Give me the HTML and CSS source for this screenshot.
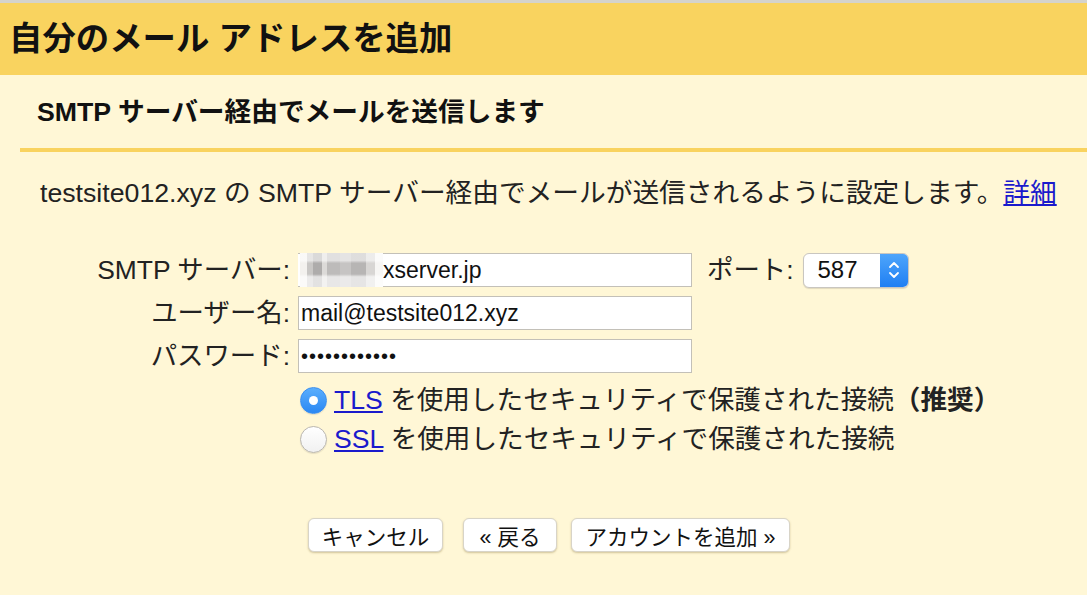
FILE: index.html
```html
<!DOCTYPE html>
<html lang="ja">
<head>
    <meta charset="UTF-8">
    <title>自分のメール アドレスを追加</title>
    <link rel="stylesheet" href="styles.css">
</head>
<body>
    <div class="header">
        <h1 class="title">自分のメール アドレスを追加</h1>
    </div>

    <div class="sub-header">
        <h2 class="sub-title">SMTP サーバー経由でメールを送信します</h2>
    </div>

    <p class="desc">testsite012.xyz の SMTP サーバー経由でメールが送信されるように設定します。<a href="#">詳細</a></p>

    <div class="form">
        <div class="row">
            <label class="label">SMTP サーバー:</label>
            <div class="field-wrap">
                <span class="blur"></span>
                <input class="field field-server" type="text" value="xserver.jp">
            </div>
            <label class="port-label">ポート:</label>
            <div class="select">
                <span class="select-value">587</span>
                <span class="select-arrows">
                    <svg width="14" height="22" viewBox="0 0 14 22">
                        <path d="M3 8 L7 4 L11 8" fill="none" stroke="#fff" stroke-width="1.8" stroke-linecap="round" stroke-linejoin="round"/>
                        <path d="M3 14 L7 18 L11 14" fill="none" stroke="#fff" stroke-width="1.8" stroke-linecap="round" stroke-linejoin="round"/>
                    </svg>
                </span>
            </div>
        </div>
        <div class="row">
            <label class="label">ユーザー名:</label>
            <input class="field" type="text" value="mail@testsite012.xyz">
        </div>
        <div class="row">
            <label class="label">パスワード:</label>
            <input class="field field-pass" type="text" value="••••••••••••">
        </div>

        <div class="options">
            <div class="option">
                <span class="radio radio-on"></span>
                <span><a href="#">TLS</a> を使用したセキュリティで保護された接続<b>（推奨）</b></span>
            </div>
            <div class="option">
                <span class="radio"></span>
                <span><a href="#">SSL</a> を使用したセキュリティで保護された接続</span>
            </div>
        </div>
    </div>

    <div class="buttons">
        <button class="btn btn-cancel">キャンセル</button>
        <button class="btn btn-back">« 戻る</button>
        <button class="btn btn-add">アカウントを追加 »</button>
    </div>
</body>
</html>
```

FILE: styles.css
```css
:root {
    --header-yellow: #f9d35f;
    --page-yellow: #fff7d6;
    --text: #222222;
    --link: #1a1acc;
}

body {
    margin: 0;
    background: var(--page-yellow);
    color: var(--text);
    font-family: 'Liberation Sans', 'Noto Sans CJK JP', sans-serif;
    border-top: 3px solid #d5d3cc;
    min-height: 592px;
}

.header {
    background: var(--header-yellow);
    height: 72px;
    display: flex;
    align-items: center;
    padding-left: 9px;
}

.title {
    margin: 0;
    font-size: 33.4px;
    line-height: 40px;
    font-weight: 700;
    color: #111;
}

.sub-header {
    margin-left: 20px;
    height: 73px;
    border-bottom: 4px solid var(--header-yellow);
    display: flex;
    align-items: center;
    padding-left: 17px;
}

.sub-title {
    margin: 0;
    font-size: 26.7px;
    line-height: 32px;
    font-weight: 700;
    color: #111;
}

.desc {
    margin: 26px 0 0 40px;
    font-size: 26.7px;
    line-height: 30px;
    white-space: nowrap;
}

.desc a,
.option a {
    color: var(--link);
    text-decoration: underline;
}

.form {
    margin-top: 45px;
    display: flex;
    flex-direction: column;
    gap: 9px;
}

.row {
    display: flex;
    align-items: center;
    height: 34px;
}

.label {
    width: 290px;
    text-align: right;
    font-size: 26.4px;
    line-height: 34px;
    padding-right: 8px;
    white-space: nowrap;
}

.field {
    box-sizing: border-box;
    width: 394px;
    height: 34px;
    border: 1px solid #c3c0b8;
    background: #fff;
    font-family: 'Liberation Sans', sans-serif;
    font-size: 23px;
    color: #111;
    padding: 0 0 0 2px;
    margin: 0;
    outline: none;
}

.field-pass {
    font-size: 20px;
    letter-spacing: 1px;
}

.field-wrap {
    position: relative;
    display: flex;
}

.field-server {
    padding-left: 85px;
    border-left: none;
}

.blur {
    position: absolute;
    left: 2px;
    top: 0;
    width: 83px;
    height: 34px;
    background:
        linear-gradient(180deg, rgba(255,255,255,0.55) 0%, rgba(255,255,255,0.55) 22%, rgba(255,255,255,0) 30%, rgba(255,255,255,0) 62%, rgba(255,255,255,0.65) 70%, rgba(255,255,255,0.65) 100%),
        linear-gradient(90deg, #f3f1ee 0%, #f3f1ee 8%, #c9c7c5 8%, #c9c7c5 16%, #aeacab 16%, #aeacab 26%, #dcdad8 26%, #dcdad8 32%, #bdbbba 32%, #bdbbba 48%, #c6c4c3 48%, #c6c4c3 62%, #b7b5b4 62%, #b7b5b4 80%, #d8d6d4 80%, #d8d6d4 90%, #f7f6f4 90%);
}

.port-label {
    font-size: 26.4px;
    line-height: 34px;
    margin-left: 15px;
    margin-right: 9px;
    white-space: nowrap;
}

.select {
    box-sizing: border-box;
    width: 106px;
    height: 35px;
    border: 1px solid #c9c6c0;
    border-radius: 6px;
    background: #fff;
    display: flex;
    align-items: stretch;
    overflow: hidden;
    box-shadow: 0 1px 1px rgba(0, 0, 0, 0.12);
}

.select-value {
    flex: 1;
    display: flex;
    align-items: center;
    padding-left: 14px;
    font-size: 24px;
    color: #111;
}

.select-arrows {
    width: 28px;
    background: linear-gradient(180deg, #4ea5fb 0%, #1f7ff3 100%);
    display: flex;
    align-items: center;
    justify-content: center;
}

.options {
    margin-top: 4px;
    margin-left: 300px;
    display: flex;
    flex-direction: column;
    gap: 11px;
}

.option {
    display: flex;
    align-items: center;
    gap: 7px;
    font-size: 26.6px;
    line-height: 28px;
    height: 28px;
    white-space: nowrap;
}

.option b {
    font-weight: 700;
}

.radio {
    box-sizing: border-box;
    flex: none;
    width: 27px;
    height: 27px;
    border-radius: 50%;
    border: 1px solid #b9b6b0;
    background: linear-gradient(180deg, #ffffff 0%, #f1f1f1 100%);
    box-shadow: 0 1px 1px rgba(0, 0, 0, 0.1);
    display: flex;
    align-items: center;
    justify-content: center;
}

.radio-on {
    border-color: #3a8ef0;
    background: linear-gradient(180deg, #5aaefd 0%, #2b88f3 100%);
}

.radio-on::after {
    content: '';
    width: 9px;
    height: 9px;
    border-radius: 50%;
    background: #fff;
}

.buttons {
    margin-top: 65px;
    margin-left: 308px;
    display: flex;
    gap: 20px;
}

.btn {
    height: 34px;
    padding: 0 10px;
    background: #fff;
    border: 1px solid #d8d4c8;
    border-radius: 6px;
    box-shadow: 0 1px 2px rgba(120, 100, 40, 0.35);
    font-family: 'Liberation Sans', 'Noto Sans CJK JP', sans-serif;
    font-size: 21.5px;
    color: #111;
    white-space: nowrap;
}

.btn-cancel {
    width: 135px;
}

.btn-back {
    width: 94px;
}

.btn-add {
    width: 219px;
    margin-left: -6px;
}
```
